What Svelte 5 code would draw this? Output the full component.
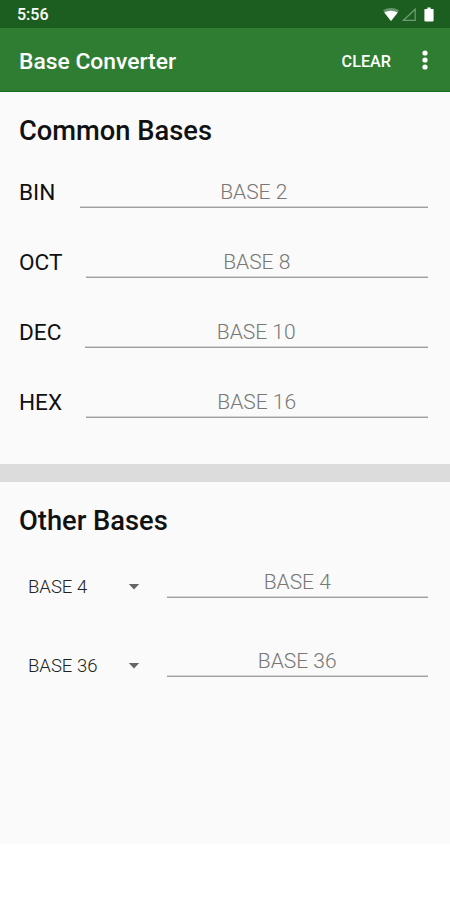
<script>
  const common = [
    { label: 'BIN', hint: 'BASE 2', start: 80 },
    { label: 'OCT', hint: 'BASE 8', start: 86 },
    { label: 'DEC', hint: 'BASE 10', start: 85 },
    { label: 'HEX', hint: 'BASE 16', start: 86 }
  ];
  const others = ['BASE 4', 'BASE 36'];
</script>

<main>
  <div class="status">
    <span class="time">5:56</span>
    <svg width="54" height="18" viewBox="0 0 54 18">
      <path d="M1 4.2Q9-.2 17 4.2L9 15Z" fill="#fff" opacity=".35" />
      <path d="M2.2 6.4Q9 3.2 15.8 6.4L9 15Z" fill="#fff" />
      <path d="M21.5 14.3L33.2 3.2V14.3Z" fill="none" stroke="#fff" stroke-width="1.2" opacity=".38" />
      <path d="M43.2 3H45.3V1.6H48.7V3H50.8Q51.6 3 51.6 3.8V14.6Q51.6 15.4 50.8 15.4H43.2Q42.4 15.4 42.4 14.6V3.8Q42.4 3 43.2 3Z" fill="#fff" />
    </svg>
  </div>
  <header>
    <span class="title">Base Converter</span>
    <span class="clear">CLEAR</span>
    <svg width="8" height="22" viewBox="0 0 8 22" fill="#fff">
      <circle cx="4" cy="4" r="2.6" /><circle cx="4" cy="11" r="2.6" /><circle cx="4" cy="18" r="2.6" />
    </svg>
  </header>

  <section class="common">
    <h2>Common Bases</h2>
    {#each common as row}
      <div class="row">
        <span class="label" style="width: {row.start - 19}px">{row.label}</span>
        <span class="field">{row.hint}</span>
      </div>
    {/each}
  </section>

  <div class="divider"></div>

  <section class="others">
    <h2>Other Bases</h2>
    {#each others as base}
      <div class="row">
        <span class="select">
          <span>{base}</span>
          <svg width="12" height="6" viewBox="0 0 12 6"><path d="M.8 0H11.2L6 5.6Z" fill="#666" /></svg>
        </span>
        <span class="field">{base}</span>
      </div>
    {/each}
  </section>
</main>

<style>
  :global(body) { margin: 0; background: #fff; }
  main {
    box-sizing: border-box;
    width: 450px;
    height: 844px;
    background: #fafafa;
    color: #111;
    font-family: Roboto, sans-serif;
    white-space: nowrap;
  }
  .status {
    display: flex;
    justify-content: space-between;
    height: 28px;
    padding: 0 14px 0 17px;
    background: #1b5e20;
    color: #fff;
  }
  .status svg { margin-top: 6px; }
  .time { font-size: 16px; line-height: 30px; font-weight: 500; }
  header {
    box-sizing: border-box;
    display: flex;
    align-items: center;
    height: 64px;
    padding: 0 21px 0 19px;
    background: #2e7d32;
    border-bottom: 1px solid #177019;
    color: #fff;
  }
  header svg { margin: 1px 0 0 30px; }
  .title { flex: 1; font-size: 22.85px; font-weight: 500; line-height: 30px; margin-top: 5px; }
  .clear { font-size: 16.2px; font-weight: 500; line-height: 30px; margin-top: 4px; }
  section { padding: 0 22.5px 0 19px; }
  .common { height: 372px; }
  h2 {
    margin: 0;
    padding-top: 23px;
    font-size: 27.3px;
    line-height: 32px;
    font-weight: 500;
  }
  .row { display: flex; height: 70px; }
  .common .row:first-of-type { margin-top: 26px; }
  .label { flex: none; font-size: 22.6px; line-height: 39px; }
  .field {
    flex: 1;
    height: 34px;
    border-bottom: 1px solid #a0a0a0;
    box-shadow: inset 0 -1px #d2d2d2;
    font-size: 21px;
    font-weight: 300;
    line-height: 39px;
    text-align: center;
    color: #777;
  }
  .divider { height: 18px; background: #dcdcdc; }
  .others .row { height: 79px; }
  .others .row:first-of-type { margin-top: 26px; }
  .select {
    box-sizing: border-box;
    flex: none;
    display: flex;
    justify-content: space-between;
    align-items: center;
    width: 148px;
    height: 34px;
    padding: 0 27px 0 9px;
    margin-top: 7px;
    font-size: 18.5px;
    font-weight: 300;
    color: #222;
  }
  .select span { margin-top: -1px; }
</style>
